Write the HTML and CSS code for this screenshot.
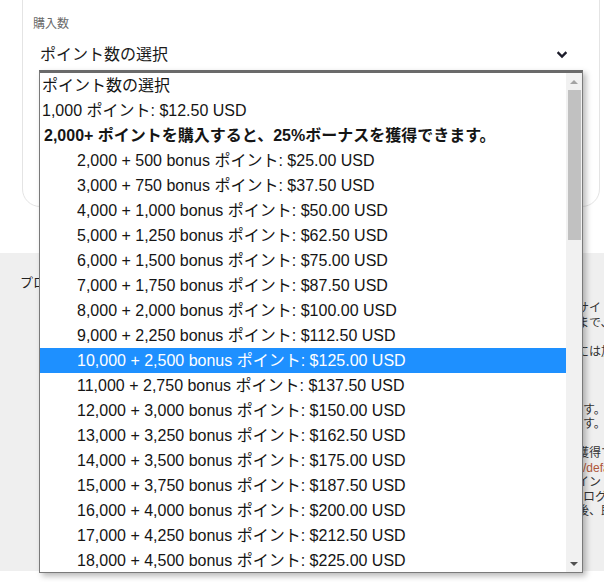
FILE: index.html
```html
<!DOCTYPE html>
<html lang="ja">
<head>
<meta charset="utf-8">
<title>購入数</title>
<link rel="stylesheet" href="styles.css">
</head>
<body>
<div class="page">
  <section class="card">
    <div class="field-label">購入数</div>
    <div class="select-display">
      <span class="select-value">ポイント数の選択</span>
      <svg class="chevron" width="10" height="8" viewBox="0 0 10 8"><path d="M1.5 2 L5 5.5 L8.5 2" fill="none" stroke="#1c1c2a" stroke-width="2.4" stroke-linecap="square"/></svg>
    </div>
  </section>

  <section class="info">
    <h3 class="info-title">プロモ</h3>
    <div class="info-text">
      <span class="ln">サイト</span>
      <span class="ln">まで、</span>
      <span class="ln blank">&nbsp;</span>
      <span class="ln">には加</span>
      <span class="ln blank">&nbsp;</span>
      <span class="ln blank">&nbsp;</span>
      <span class="ln blank">&nbsp;</span>
      <span class="ln full">す。</span>
      <span class="ln full">す。</span>
      <span class="ln blank">&nbsp;</span>
      <span class="ln">獲得す</span>
      <span class="ln full link">/default</span>
      <span class="ln">イン</span>
      <span class="ln full">ログラ</span>
      <span class="ln">後、即</span>
    </div>
  </section>
</div>

<div class="listbox">
  <div class="options">
    <div class="opt">ポイント数の選択</div>
    <div class="opt">1,000 ポイント: $12.50 USD</div>
    <div class="opt group">2,000+ ポイントを購入すると、25%ボーナスを獲得できます。</div>
    <div class="opt sub">2,000 + 500 bonus ポイント: $25.00 USD</div>
    <div class="opt sub">3,000 + 750 bonus ポイント: $37.50 USD</div>
    <div class="opt sub">4,000 + 1,000 bonus ポイント: $50.00 USD</div>
    <div class="opt sub">5,000 + 1,250 bonus ポイント: $62.50 USD</div>
    <div class="opt sub">6,000 + 1,500 bonus ポイント: $75.00 USD</div>
    <div class="opt sub">7,000 + 1,750 bonus ポイント: $87.50 USD</div>
    <div class="opt sub">8,000 + 2,000 bonus ポイント: $100.00 USD</div>
    <div class="opt sub">9,000 + 2,250 bonus ポイント: $112.50 USD</div>
    <div class="opt sub selected">10,000 + 2,500 bonus ポイント: $125.00 USD</div>
    <div class="opt sub">11,000 + 2,750 bonus ポイント: $137.50 USD</div>
    <div class="opt sub">12,000 + 3,000 bonus ポイント: $150.00 USD</div>
    <div class="opt sub">13,000 + 3,250 bonus ポイント: $162.50 USD</div>
    <div class="opt sub">14,000 + 3,500 bonus ポイント: $175.00 USD</div>
    <div class="opt sub">15,000 + 3,750 bonus ポイント: $187.50 USD</div>
    <div class="opt sub">16,000 + 4,000 bonus ポイント: $200.00 USD</div>
    <div class="opt sub">17,000 + 4,250 bonus ポイント: $212.50 USD</div>
    <div class="opt sub">18,000 + 4,500 bonus ポイント: $225.00 USD</div>
  </div>
  <div class="scrollbar">
    <div class="sb-btn"><span class="arrow-up"></span></div>
    <div class="sb-track"><div class="sb-thumb"></div></div>
    <div class="sb-btn"><span class="arrow-down"></span></div>
  </div>
</div>
</body>
</html>
```

FILE: styles.css
```css
html, body {
  margin: 0;
  padding: 0;
  background: #ffffff;
  overflow: hidden;
}

body {
  width: 604px;
  height: 582px;
  position: relative;
  font-family: "Liberation Sans", "Noto Sans CJK JP", sans-serif;
  color: #1a1a1a;
}

.page {
  display: flex;
  flex-direction: column;
}

.card {
  margin: -20px 4px 0 22px;
  height: 227px;
  box-sizing: border-box;
  border: 1px solid #e4e4e4;
  border-radius: 18px;
  padding: 35px 10px 0 10px;
}

.field-label {
  font-size: 12px;
  line-height: 16px;
  color: #6a6a6a;
}

.select-display {
  margin-top: 11px;
  height: 24px;
  display: flex;
  align-items: center;
  justify-content: space-between;
  padding: 0 22px 0 7px;
}

.select-value {
  font-size: 16px;
  line-height: 24px;
  color: #1a1a1a;
}

.chevron {
  display: block;
}

.info {
  margin-top: 46px;
  height: 318px;
  background: #efefef;
  display: flex;
  align-items: flex-start;
  box-sizing: border-box;
  padding: 23px 0 0 20px;
  overflow: hidden;
}

.info-title {
  margin: 0;
  font-size: 13px;
  font-weight: normal;
  line-height: 14.5px;
  color: #222;
  width: 120px;
  flex: none;
}

.info-text {
  margin-left: 437px;
  padding-top: 25px;
  flex: none;
  width: 60px;
  display: flex;
  flex-direction: column;
  font-size: 12px;
  line-height: 14.5px;
  color: #333;
}

.ln {
  display: block;
  white-space: nowrap;
  height: 14.5px;
}

.ln.full {
  padding-left: 6px;
}

.ln.link {
  color: #b0573a;
}

/* dropdown popup, overlaying the page */
.listbox {
  position: absolute;
  left: 39px;
  top: 70px;
  width: 544px;
  height: 503px;
  box-sizing: border-box;
  background: #fff;
  border: 1px solid #7a7a7a;
  border-top: 3px solid #6a6a6a;
  box-shadow: 3px 3px 6px rgba(0, 0, 0, 0.28);
  display: flex;
  overflow: hidden;
}

.options {
  flex: 1;
  overflow: hidden;
}

.opt {
  height: 25px;
  line-height: 25px;
  font-size: 16px;
  padding-left: 2px;
  white-space: nowrap;
  color: #151515;
}

.opt.group {
  font-weight: bold;
  padding-left: 4px;
}

.opt.sub {
  padding-left: 37px;
}

.opt.selected {
  background: #1e90ff;
  color: #ffffff;
}

.scrollbar {
  width: 16px;
  flex: none;
  background: #f1f1f1;
  display: flex;
  flex-direction: column;
}

.sb-btn {
  height: 17px;
  display: flex;
  align-items: center;
  justify-content: center;
  flex: none;
}

.arrow-up {
  width: 0;
  height: 0;
  border-left: 4px solid transparent;
  border-right: 4px solid transparent;
  border-bottom: 4px solid #a3a3a3;
}

.arrow-down {
  width: 0;
  height: 0;
  border-left: 4px solid transparent;
  border-right: 4px solid transparent;
  border-top: 4px solid #505050;
}

.sb-track {
  flex: 1;
  padding: 0 1px 0 2px;
}

.sb-thumb {
  height: 150px;
  background: #c1c1c1;
}
```
